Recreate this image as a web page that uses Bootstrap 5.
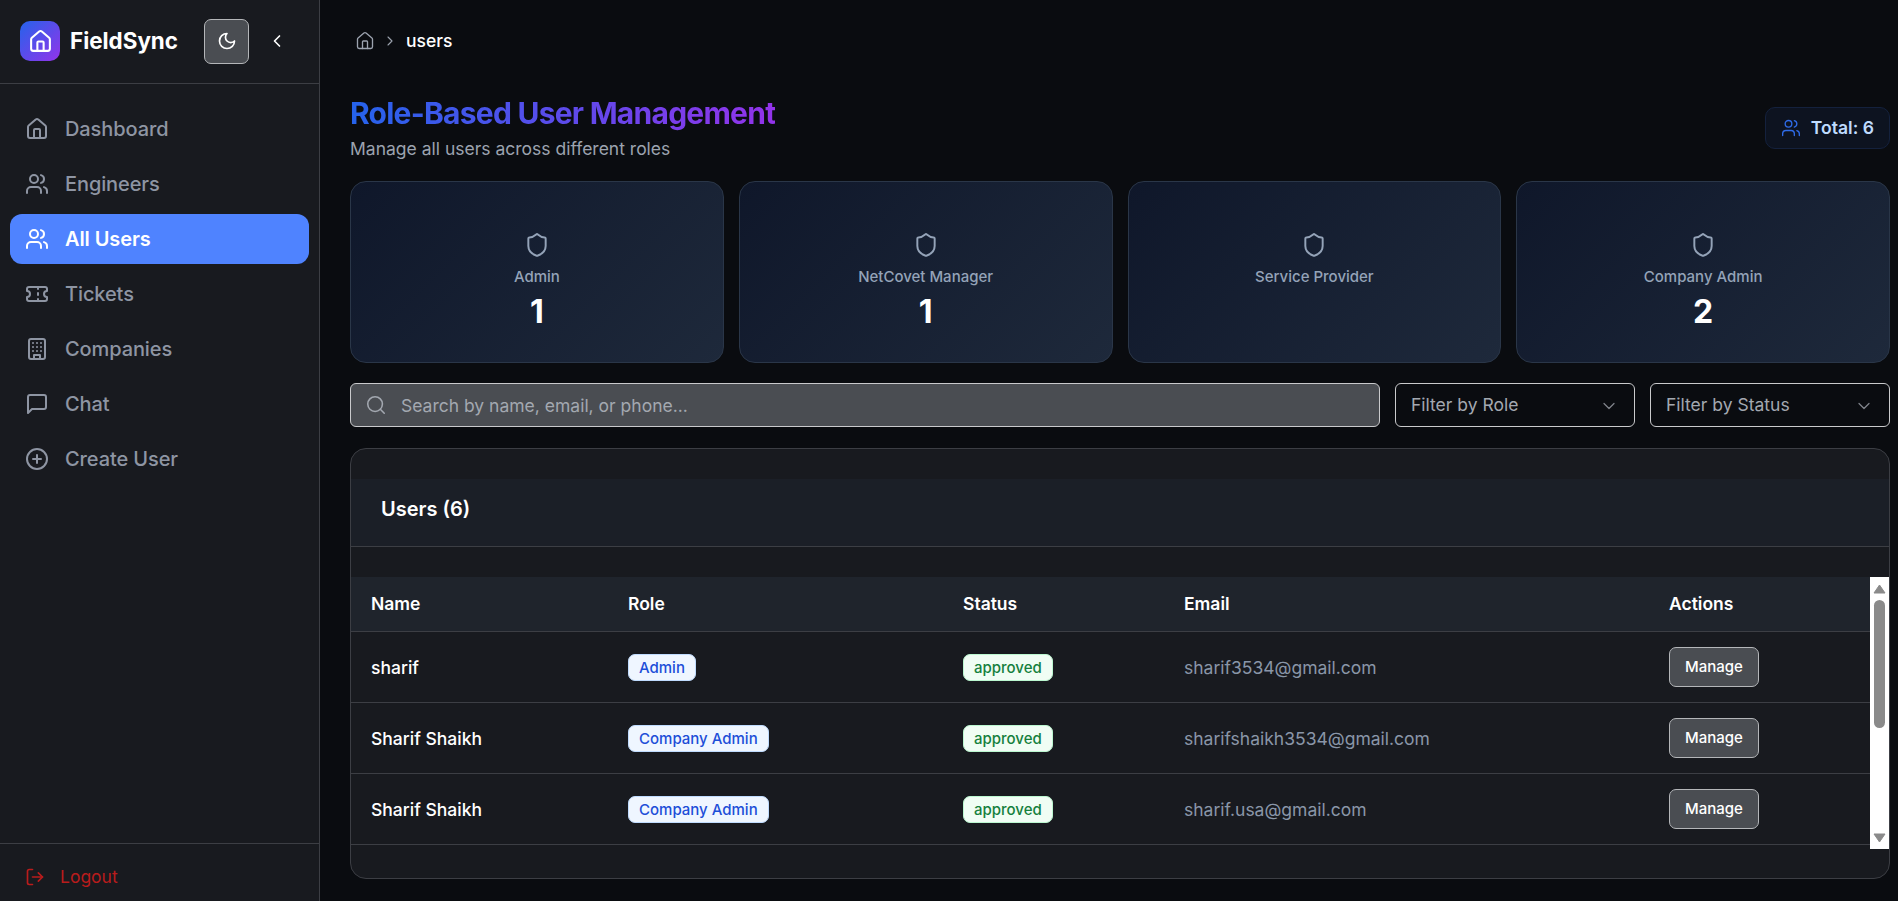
<!DOCTYPE html>
<html lang="en">
<head>
<meta charset="utf-8">
<title>FieldSync - Users</title>
<link href="https://cdn.jsdelivr.net/npm/bootstrap@5.3.0/dist/css/bootstrap.min.css" rel="stylesheet">
<style>
html,body{height:100%;overflow:hidden}
body{background:#0a0c10;font-family:"Inter","Liberation Sans",sans-serif;color:#fff}
.ico{width:24px;height:24px;fill:none;stroke:currentColor;stroke-width:2;stroke-linecap:round;stroke-linejoin:round;flex:none}
.app-shell{height:901px}
.side-panel{width:320px;flex:none;background:#181a1f;border-right:1px solid #3c3e44}
.side-head{height:84px;padding:0 20px 1px;border-bottom:1px solid #3c3e44}
.brand-mark{width:40px;height:40px;border-radius:10px;background:linear-gradient(135deg,#2563eb,#9333ea);color:#fff}
.brand-mark .ico{width:25px;height:25px}
.brand-name{font-size:22.4px;font-weight:700;margin-left:10px;width:134px;white-space:nowrap}
.theme-btn{width:45px;height:45px;padding:0;background:#4a4d52;border:1px solid #b4b6b9;border-radius:7px;color:#fff}
.theme-btn .ico{width:20px;height:20px}
.fold-btn{width:40px;height:40px;padding:0;margin-left:8px;border:0;background:none;color:#fff}
.fold-btn .ico{width:20px;height:20px}
.side-nav{padding:20px 10px 0;gap:5px}
.side-nav .nav-link{height:50px;padding:0 15px;gap:16px;border-radius:12px;color:#8e95a3;font-size:20px;font-weight:500;letter-spacing:-.1px}
.side-nav .nav-link.active{background:#4f83ff;color:#fff;font-weight:600}
.side-foot{height:58px;border-top:1px solid #3c3e44;padding:9px 25px 0;gap:15px;color:#b91c1c;font-size:17.5px}
.side-foot .ico{width:20px;height:20px}
.main-pane{padding:29px 8px 0 30px;min-width:0}
.crumbs{height:24px;gap:10px;margin-bottom:42px;font-size:17.5px;font-weight:500;margin-left:5px}
.crumbs .ico{color:#9ca3af;width:20px;height:20px;stroke-width:1.6}
.crumbs .sep{width:16px;height:16px;margin:0 -2px 0 -3px}
.page-title{font-size:30px;line-height:36px;font-weight:700;margin:0 0 6px;letter-spacing:-.75px;width:max-content;background:linear-gradient(90deg,#2563eb,#9333ea);-webkit-background-clip:text;background-clip:text;color:transparent}
.page-sub{font-size:17.5px;line-height:24px;color:#9ca3af;margin:0}
.total-chip{height:42px;padding:0 15px;gap:10px;border:1px solid #14213d;border-radius:10px;background:#0d1320;color:#bfdbfe;font-size:17.6px;font-weight:600}
.total-chip .ico{color:#2f6be8;width:20px;height:20px;stroke-width:1.6}
.stat-grid{display:grid;grid-template-columns:repeat(4,1fr);gap:15px;margin-top:20px}
.stat-box{height:182px;border:1px solid #2a3648;border-radius:16px;background:linear-gradient(135deg,#0f172a,#1e293b);padding-top:50px}
.stat-box .ico{width:26px;height:26px;stroke-width:1.8;color:#94a3b8;display:block;margin:0 auto}
.stat-label{font-size:15px;line-height:20px;font-weight:500;color:#94a3b8;margin-top:9px}
.stat-num{font-size:32px;line-height:40px;font-weight:700;margin-top:5px}
.filter-row{gap:15px;margin-top:20px;height:44px}
.search-box{background:#4a4d52;border:1px solid #c9cacc;border-radius:6px;padding-left:14px;gap:14px;color:#a3a8b0}
.search-box .ico{width:22px;height:22px;stroke-width:1.7}
.search-box input{background:none;border:0;padding:2px 0 0;font-size:17.5px;color:#fff;box-shadow:none}
.search-box input::placeholder{color:#a3a8b0}
.filter-btn{width:240px;height:44px;background:#0a0c10;border:1px solid #c9cacc;border-radius:6px;color:#a3a8b0;font-size:17.5px;padding:1px 15px 0 15px;text-align:left}
.filter-btn .ico{width:20px;height:20px;color:#7f838a;stroke-width:1.5}
.users-panel{height:431px;margin-top:21px;background:#181a1f;border:1px solid #3c3e44;border-radius:16px;padding:30px 0;overflow:hidden}
.users-head{height:68px;padding:0 30px 7px;background:#1b1f27;border-bottom:1px solid #3c3e44;margin-bottom:30px}
.users-head h2{font-size:20px;font-weight:600;margin:0;color:#fff}
.table-wrap{height:272px}
.users-table{--bs-table-bg:transparent;--bs-table-color:#fff;--bs-table-border-color:#3c3e44;table-layout:fixed;margin:0;border-collapse:separate;border-spacing:0}
.users-table th,.users-table td{padding:0 21px;vertical-align:middle;border-bottom:1px solid #3c3e44}
.users-table th:first-child,.users-table td:first-child{padding-left:20px}
.users-table th{height:55px;background:#1f242c;color:#fff;font-size:17.5px;font-weight:600}
.users-table td{height:71px;font-size:17.5px;font-weight:500;color:#fff}
.users-table td:first-child,.users-table td.mail-cell{padding-top:2px}
.users-table td.mail-cell{color:#8a96a8;font-weight:400;font-size:17.5px}
.pill-tag{display:inline-block;height:27px;line-height:25px;padding:0 10px;font-size:15px;font-weight:500;border-radius:7px;border:1px solid}
.tag-role{background:#eff6ff;border-color:#bfdbfe;color:#1d4ed8}
.tag-ok{background:#f0fdf4;border-color:#bbf7d0;color:#15803d}
.manage-btn{width:90px;height:40px;padding:0;background:#4a4d52;border:1px solid #b4b6b9;border-radius:7px;color:#fff;font-size:15px;font-weight:500}
.bar-rail{width:19px;flex:none;background:#fff}
.bar-step{height:23px;color:#8a8a8a}
.bar-step svg{width:13px;height:10px;fill:currentColor;stroke:currentColor;stroke-width:1;stroke-linejoin:round}
.bar-thumb{height:128px;margin:0 4px;background:#8a8a8a;border-radius:6px}
</style>
</head>
<body>
<svg class="d-none" xmlns="http://www.w3.org/2000/svg">
<symbol id="i-house" viewBox="0 0 24 24"><path d="M15 21v-8a1 1 0 0 0-1-1h-4a1 1 0 0 0-1 1v8"/><path d="M3 10a2 2 0 0 1 .709-1.528l7-5.999a2 2 0 0 1 2.582 0l7 5.999A2 2 0 0 1 21 10v9a2 2 0 0 1-2 2H5a2 2 0 0 1-2-2z"/></symbol>
<symbol id="i-users" viewBox="0 0 24 24"><path d="M16 21v-2a4 4 0 0 0-4-4H6a4 4 0 0 0-4 4v2"/><circle cx="9" cy="7" r="4"/><path d="M22 21v-2a4 4 0 0 0-3-3.87"/><path d="M16 3.13a4 4 0 0 1 0 7.75"/></symbol>
<symbol id="i-ticket" viewBox="0 0 24 24"><path d="M2 9a3 3 0 0 1 0 6v2a2 2 0 0 0 2 2h16a2 2 0 0 0 2-2v-2a3 3 0 0 1 0-6V7a2 2 0 0 0-2-2H4a2 2 0 0 0-2 2Z"/><path d="M13 5v2"/><path d="M13 17v2"/><path d="M13 11v2"/></symbol>
<symbol id="i-building" viewBox="0 0 24 24"><rect width="16" height="20" x="4" y="2" rx="2" ry="2"/><path d="M9 22v-4h6v4"/><path d="M8 6h.01"/><path d="M16 6h.01"/><path d="M12 6h.01"/><path d="M12 10h.01"/><path d="M12 14h.01"/><path d="M16 10h.01"/><path d="M16 14h.01"/><path d="M8 10h.01"/><path d="M8 14h.01"/></symbol>
<symbol id="i-chat" viewBox="0 0 24 24"><path d="M21 15a2 2 0 0 1-2 2H7l-4 4V5a2 2 0 0 1 2-2h14a2 2 0 0 1 2 2z"/></symbol>
<symbol id="i-plus" viewBox="0 0 24 24"><circle cx="12" cy="12" r="10"/><path d="M8 12h8"/><path d="M12 8v8"/></symbol>
<symbol id="i-logout" viewBox="0 0 24 24"><path d="M9 21H5a2 2 0 0 1-2-2V5a2 2 0 0 1 2-2h4"/><polyline points="16 17 21 12 16 7"/><line x1="21" x2="9" y1="12" y2="12"/></symbol>
<symbol id="i-moon" viewBox="0 0 24 24"><path d="M12 3a6 6 0 0 0 9 9 9 9 0 1 1-9-9Z"/></symbol>
<symbol id="i-left" viewBox="0 0 24 24"><path d="m15 18-6-6 6-6"/></symbol>
<symbol id="i-right" viewBox="0 0 24 24"><path d="m9 18 6-6-6-6"/></symbol>
<symbol id="i-down" viewBox="0 0 24 24"><path d="m6 9 6 6 6-6"/></symbol>
<symbol id="i-shield" viewBox="0 0 24 24"><path d="M20 13c0 5-3.5 7.5-7.66 8.95a1 1 0 0 1-.67-.01C7.5 20.5 4 18 4 13V6a1 1 0 0 1 1-1c2 0 4.5-1.2 6.24-2.72a1.17 1.17 0 0 1 1.52 0C14.51 3.81 17 5 19 5a1 1 0 0 1 1 1z"/></symbol>
<symbol id="i-search" viewBox="0 0 24 24"><circle cx="11" cy="11" r="8"/><path d="m21 21-4.3-4.3"/></symbol>
</svg>

<div class="app-shell d-flex">
  <aside class="side-panel d-flex flex-column">
    <div class="side-head d-flex align-items-center">
      <span class="brand-mark d-flex align-items-center justify-content-center"><svg class="ico"><use href="#i-house"/></svg></span>
      <span class="brand-name">FieldSync</span>
      <button class="theme-btn btn d-flex align-items-center justify-content-center" type="button" aria-label="Theme"><svg class="ico"><use href="#i-moon"/></svg></button>
      <button class="fold-btn btn d-flex align-items-center justify-content-center" type="button" aria-label="Collapse"><svg class="ico"><use href="#i-left"/></svg></button>
    </div>
    <nav class="side-nav nav flex-column flex-grow-1">
      <a class="nav-link d-flex align-items-center" href="#"><svg class="ico"><use href="#i-house"/></svg>Dashboard</a>
      <a class="nav-link d-flex align-items-center" href="#"><svg class="ico"><use href="#i-users"/></svg>Engineers</a>
      <a class="nav-link active d-flex align-items-center" href="#"><svg class="ico"><use href="#i-users"/></svg>All Users</a>
      <a class="nav-link d-flex align-items-center" href="#"><svg class="ico"><use href="#i-ticket"/></svg>Tickets</a>
      <a class="nav-link d-flex align-items-center" href="#"><svg class="ico"><use href="#i-building"/></svg>Companies</a>
      <a class="nav-link d-flex align-items-center" href="#"><svg class="ico"><use href="#i-chat"/></svg>Chat</a>
      <a class="nav-link d-flex align-items-center" href="#"><svg class="ico"><use href="#i-plus"/></svg>Create User</a>
    </nav>
    <div class="side-foot d-flex align-items-center"><svg class="ico"><use href="#i-logout"/></svg>Logout</div>
  </aside>

  <main class="main-pane flex-grow-1">
    <div class="crumbs d-flex align-items-center">
      <svg class="ico"><use href="#i-house"/></svg>
      <svg class="ico sep"><use href="#i-right"/></svg>
      <span>users</span>
    </div>

    <div class="d-flex justify-content-between align-items-center">
      <div>
        <h1 class="page-title">Role-Based User Management</h1>
        <p class="page-sub">Manage all users across different roles</p>
      </div>
      <div class="total-chip d-flex align-items-center"><svg class="ico"><use href="#i-users"/></svg>Total: 6</div>
    </div>

    <div class="stat-grid">
      <div class="stat-box text-center"><svg class="ico"><use href="#i-shield"/></svg><div class="stat-label">Admin</div><div class="stat-num">1</div></div>
      <div class="stat-box text-center"><svg class="ico"><use href="#i-shield"/></svg><div class="stat-label">NetCovet Manager</div><div class="stat-num">1</div></div>
      <div class="stat-box text-center"><svg class="ico"><use href="#i-shield"/></svg><div class="stat-label">Service Provider</div></div>
      <div class="stat-box text-center"><svg class="ico"><use href="#i-shield"/></svg><div class="stat-label">Company Admin</div><div class="stat-num">2</div></div>
    </div>

    <div class="filter-row d-flex">
      <div class="search-box d-flex align-items-center flex-grow-1">
        <svg class="ico"><use href="#i-search"/></svg>
        <input class="form-control" type="text" placeholder="Search by name, email, or phone...">
      </div>
      <button class="filter-btn btn d-flex align-items-center justify-content-between" type="button">Filter by Role<svg class="ico"><use href="#i-down"/></svg></button>
      <button class="filter-btn btn d-flex align-items-center justify-content-between" type="button">Filter by Status<svg class="ico"><use href="#i-down"/></svg></button>
    </div>

    <section class="users-panel">
      <div class="users-head d-flex align-items-center"><h2>Users (6)</h2></div>
      <div class="table-wrap d-flex">
        <div class="flex-grow-1">
          <table class="users-table table">
            <colgroup><col style="width:256px"><col style="width:335px"><col style="width:221px"><col style="width:485px"><col></colgroup>
            <thead><tr><th>Name</th><th>Role</th><th>Status</th><th>Email</th><th>Actions</th></tr></thead>
            <tbody>
              <tr><td>sharif</td><td><span class="pill-tag tag-role">Admin</span></td><td><span class="pill-tag tag-ok">approved</span></td><td class="mail-cell">sharif3534@gmail.com</td><td><button class="manage-btn btn" type="button">Manage</button></td></tr>
              <tr><td>Sharif Shaikh</td><td><span class="pill-tag tag-role">Company Admin</span></td><td><span class="pill-tag tag-ok">approved</span></td><td class="mail-cell">sharifshaikh3534@gmail.com</td><td><button class="manage-btn btn" type="button">Manage</button></td></tr>
              <tr><td>Sharif Shaikh</td><td><span class="pill-tag tag-role">Company Admin</span></td><td><span class="pill-tag tag-ok">approved</span></td><td class="mail-cell">sharif.usa@gmail.com</td><td><button class="manage-btn btn" type="button">Manage</button></td></tr>
            </tbody>
          </table>
        </div>
        <div class="bar-rail d-flex flex-column" aria-hidden="true">
          <div class="bar-step d-flex align-items-center justify-content-center"><svg viewBox="0 0 13 10"><path d="M6.5 1 12 9H1z"/></svg></div>
          <div class="bar-thumb"></div>
          <div class="flex-grow-1"></div>
          <div class="bar-step d-flex align-items-center justify-content-center"><svg viewBox="0 0 13 10"><path d="M1 1h11L6.5 9z"/></svg></div>
        </div>
      </div>
    </section>
  </main>
</div>
</body>
</html>
